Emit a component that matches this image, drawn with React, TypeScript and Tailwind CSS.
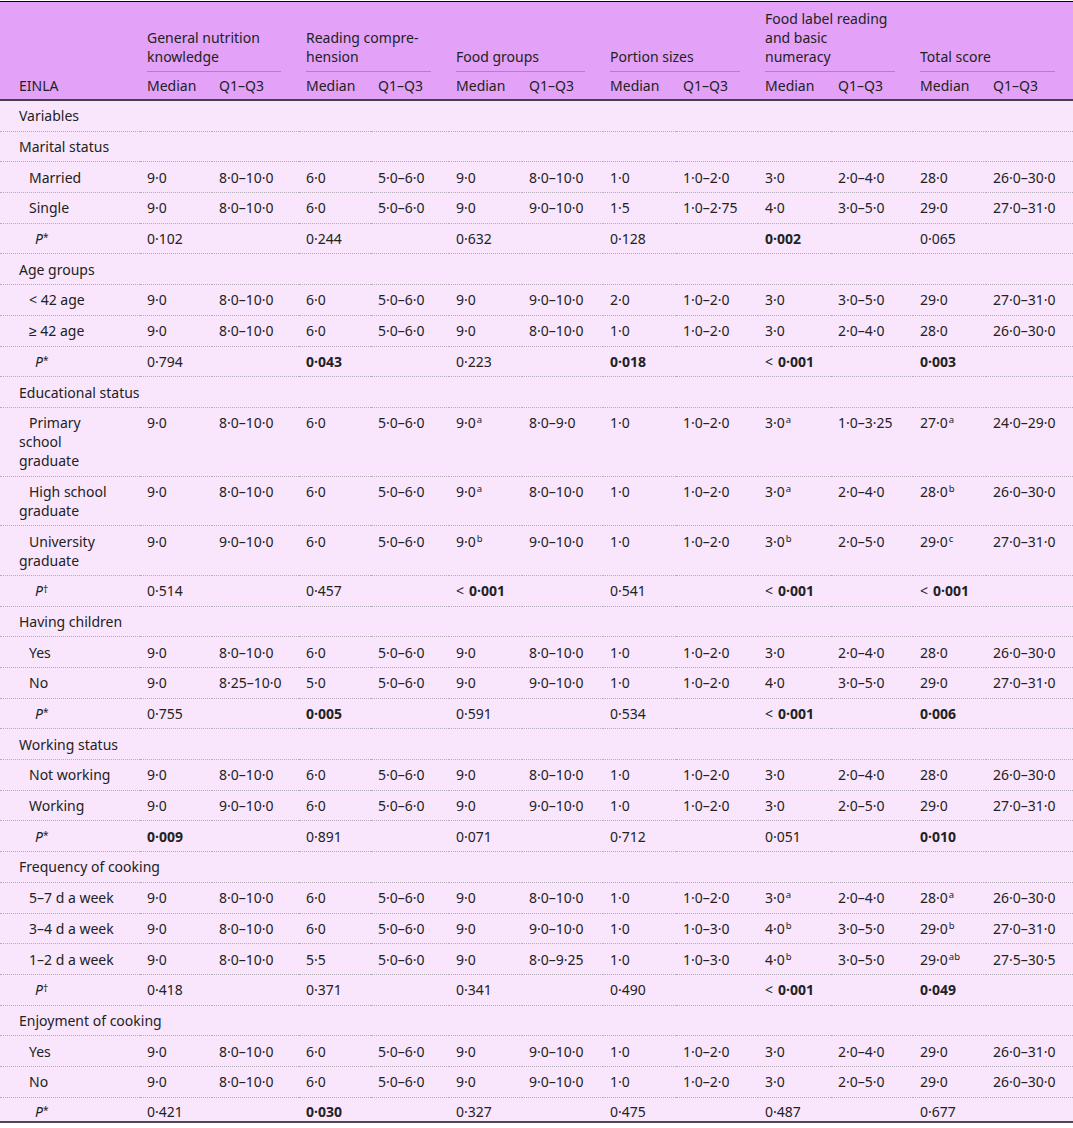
import React from "react";

// ---- Types ----

type Row =
  | { kind: "cat"; label: string }
  | { kind: "item"; label: string; vals: string[] }
  | { kind: "p"; sym: "*" | "†"; vals: string[] };

// ---- Data ----

const GROUPS: string[][] = [
  ["General nutrition", "knowledge"],
  ["Reading compre-", "hension"],
  ["Food groups"],
  ["Portion sizes"],
  ["Food label reading", "and basic", "numeracy"],
  ["Total score"],
];

const v = (s: string) => s.split(" ");

const ROWS: Row[] = [
  { kind: "cat", label: "Variables" },
  { kind: "cat", label: "Marital status" },
  { kind: "item", label: "Married", vals: v("9.0 8.0–10.0 6.0 5.0–6.0 9.0 8.0–10.0 1.0 1.0–2.0 3.0 2.0–4.0 28.0 26.0–30.0") },
  { kind: "item", label: "Single", vals: v("9.0 8.0–10.0 6.0 5.0–6.0 9.0 9.0–10.0 1.5 1.0–2.75 4.0 3.0–5.0 29.0 27.0–31.0") },
  { kind: "p", sym: "*", vals: v("0.102 0.244 0.632 0.128 !0.002 0.065") },
  { kind: "cat", label: "Age groups" },
  { kind: "item", label: "< 42 age", vals: v("9.0 8.0–10.0 6.0 5.0–6.0 9.0 9.0–10.0 2.0 1.0–2.0 3.0 3.0–5.0 29.0 27.0–31.0") },
  { kind: "item", label: "≥ 42 age", vals: v("9.0 8.0–10.0 6.0 5.0–6.0 9.0 8.0–10.0 1.0 1.0–2.0 3.0 2.0–4.0 28.0 26.0–30.0") },
  { kind: "p", sym: "*", vals: v("0.794 !0.043 0.223 !0.018 <!0.001 !0.003") },
  { kind: "cat", label: "Educational status" },
  { kind: "item", label: "Primary school graduate", vals: v("9.0 8.0–10.0 6.0 5.0–6.0 9.0^a 8.0–9.0 1.0 1.0–2.0 3.0^a 1.0–3.25 27.0^a 24.0–29.0") },
  { kind: "item", label: "High school graduate", vals: v("9.0 8.0–10.0 6.0 5.0–6.0 9.0^a 8.0–10.0 1.0 1.0–2.0 3.0^a 2.0–4.0 28.0^b 26.0–30.0") },
  { kind: "item", label: "University graduate", vals: v("9.0 9.0–10.0 6.0 5.0–6.0 9.0^b 9.0–10.0 1.0 1.0–2.0 3.0^b 2.0–5.0 29.0^c 27.0–31.0") },
  { kind: "p", sym: "†", vals: v("0.514 0.457 <!0.001 0.541 <!0.001 <!0.001") },
  { kind: "cat", label: "Having children" },
  { kind: "item", label: "Yes", vals: v("9.0 8.0–10.0 6.0 5.0–6.0 9.0 8.0–10.0 1.0 1.0–2.0 3.0 2.0–4.0 28.0 26.0–30.0") },
  { kind: "item", label: "No", vals: v("9.0 8.25–10.0 5.0 5.0–6.0 9.0 9.0–10.0 1.0 1.0–2.0 4.0 3.0–5.0 29.0 27.0–31.0") },
  { kind: "p", sym: "*", vals: v("0.755 !0.005 0.591 0.534 <!0.001 !0.006") },
  { kind: "cat", label: "Working status" },
  { kind: "item", label: "Not working", vals: v("9.0 8.0–10.0 6.0 5.0–6.0 9.0 8.0–10.0 1.0 1.0–2.0 3.0 2.0–4.0 28.0 26.0–30.0") },
  { kind: "item", label: "Working", vals: v("9.0 9.0–10.0 6.0 5.0–6.0 9.0 9.0–10.0 1.0 1.0–2.0 3.0 2.0–5.0 29.0 27.0–31.0") },
  { kind: "p", sym: "*", vals: v("!0.009 0.891 0.071 0.712 0.051 !0.010") },
  { kind: "cat", label: "Frequency of cooking" },
  { kind: "item", label: "5–7 d a week", vals: v("9.0 8.0–10.0 6.0 5.0–6.0 9.0 8.0–10.0 1.0 1.0–2.0 3.0^a 2.0–4.0 28.0^a 26.0–30.0") },
  { kind: "item", label: "3–4 d a week", vals: v("9.0 8.0–10.0 6.0 5.0–6.0 9.0 9.0–10.0 1.0 1.0–3.0 4.0^b 3.0–5.0 29.0^b 27.0–31.0") },
  { kind: "item", label: "1–2 d a week", vals: v("9.0 8.0–10.0 5.5 5.0–6.0 9.0 8.0–9.25 1.0 1.0–3.0 4.0^b 3.0–5.0 29.0^ab 27.5–30.5") },
  { kind: "p", sym: "†", vals: v("0.418 0.371 0.341 0.490 <!0.001 !0.049") },
  { kind: "cat", label: "Enjoyment of cooking" },
  { kind: "item", label: "Yes", vals: v("9.0 8.0–10.0 6.0 5.0–6.0 9.0 9.0–10.0 1.0 1.0–2.0 3.0 2.0–4.0 29.0 26.0–31.0") },
  { kind: "item", label: "No", vals: v("9.0 8.0–10.0 6.0 5.0–6.0 9.0 9.0–10.0 1.0 1.0–2.0 3.0 2.0–5.0 29.0 26.0–30.0") },
  { kind: "p", sym: "*", vals: v("0.421 !0.030 0.327 0.475 0.487 0.677") },
];

const COL_WIDTHS = [140, 72, 87, 72, 78, 73, 81, 73, 82, 73, 82, 73, 87];

// ---- Helpers ----

/** "<!0.001" -> "< **0·001**", "9.0^a" -> "9·0ᵃ" */
function Value({ raw }: { raw: string }) {
  let s = raw;
  const lt = s.startsWith("<");
  if (lt) s = s.slice(1);
  const bold = s.startsWith("!");
  if (bold) s = s.slice(1);
  const [num, sup] = s.split("^");
  const text = num.replace(/\./g, "·");
  return (
    <>
      {lt && <span className="mr-[5px]">&lt;</span>}
      <span className={bold ? "font-bold" : undefined}>{text}</span>
      {sup && (
        <span className="relative -top-[5px] ml-px text-[9.5px] leading-none">{sup}</span>
      )}
    </>
  );
}

const SEP = "border-b border-dotted border-[#b3abb6]";

// ---- Component ----

export default function App() {
  return (
    <div className="w-[1073px] bg-white pt-px text-[14px] text-[#222] [font-family:'Noto_Sans',sans-serif]">
      <table className="w-[1073px] table-fixed border-collapse leading-[19px]">
        <colgroup>
          {COL_WIDTHS.map((w, i) => (
            <col key={i} style={{ width: w }} />
          ))}
        </colgroup>
        <thead className="bg-[#e3a2f8] border-t border-black">
          <tr>
            <th rowSpan={2} className="align-bottom text-left font-normal pl-[19px] pb-[4px]">
              EINLA
            </th>
            {GROUPS.map((g, i) => (
              <th key={i} colSpan={2} className="align-bottom text-left font-normal pl-[7px] pt-[7px]">
                <div className="mr-[18px] border-b border-[#a58cad] pb-[5px]">
                  {g.map((line, j) => (
                    <div key={j}>{line}</div>
                  ))}
                </div>
              </th>
            ))}
          </tr>
          <tr className="border-b-2 border-[#454045]">
            {GROUPS.map((_, i) => (
              <React.Fragment key={i}>
                <th className="text-left font-normal pl-[7px] pt-[4px] pb-[4px]">Median</th>
                <th className="text-left font-normal pl-[7px] pt-[4px] pb-[4px]">Q1–Q3</th>
              </React.Fragment>
            ))}
          </tr>
        </thead>
        <tbody className="bg-[#f9e6fc] border-b-2 border-[#4d4a4f]">
          {ROWS.map((row, i) => {
            const last = i === ROWS.length - 1;
            const sep = last ? "" : SEP;
            const pad = last ? "pt-[4.5px] pb-0" : "py-[5.35px]";
            if (row.kind === "cat") {
              return (
                <tr key={i} className={sep}>
                  <td colSpan={13} className={`pl-[19px] ${pad}`}>
                    {row.label}
                  </td>
                </tr>
              );
            }
            const label =
              row.kind === "item" ? (
                <td className={`pl-[19px] pr-[20px] indent-[10px] align-top ${pad}`}>{row.label}</td>
              ) : (
                <td className={`pl-[19px] indent-[16px] align-top ${pad}`}>
                  <i>P</i>
                  <span className="relative -top-[3px] text-[10px] leading-none">{row.sym}</span>
                </td>
              );
            const cells =
              row.kind === "item"
                ? row.vals
                : row.vals.flatMap((x) => [x, ""]);
            return (
              <tr key={i} className={sep}>
                {label}
                {cells.map((c, j) => (
                  <td key={j} className={`pl-[7px] align-top whitespace-nowrap ${pad}`}>
                    {c && <Value raw={c} />}
                  </td>
                ))}
              </tr>
            );
          })}
        </tbody>
      </table>
    </div>
  );
}
